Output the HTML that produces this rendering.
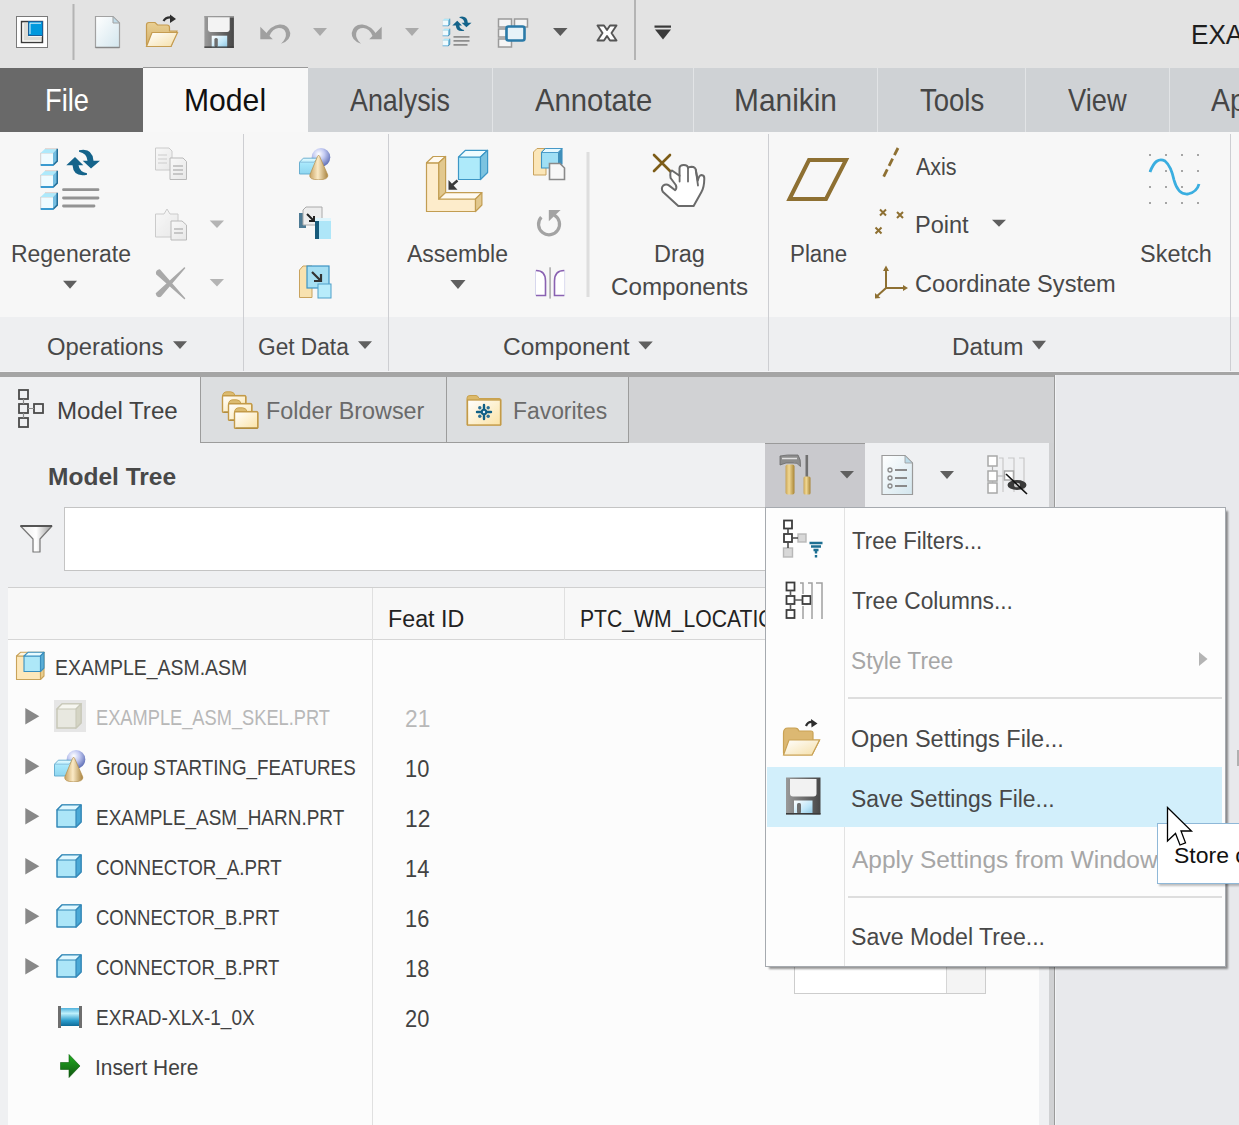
<!DOCTYPE html>
<html><head><meta charset="utf-8">
<style>
*{margin:0;padding:0;box-sizing:border-box}
html,body{width:1239px;height:1125px;overflow:hidden}
body{background:#e3e3e3;position:relative;font-family:"Liberation Sans",sans-serif;color:#3a3a3a}
.a{position:absolute}
.t{position:absolute;white-space:nowrap;line-height:1;transform-origin:0 0}
svg{position:absolute;overflow:visible}
</style></head><body>

<!-- QAT -->
<div class="a" style="left:0;top:0;width:1239px;height:68px;background:#e3e3e3"></div>
<div class="t" style="left:1191.06px;top:20.16px;font-size:28.41px;color:#1e1e1e;transform:scaleX(0.9200)">EXA</div>


<svg class="a" style="left:0;top:0" width="1239" height="377">
<defs>
<linearGradient id="gdoc" x1="0" y1="0" x2="1" y2="1"><stop offset="0" stop-color="#ffffff"/><stop offset="1" stop-color="#d3e6ee"/></linearGradient>
<linearGradient id="gfold" x1="0" y1="0" x2="0" y2="1"><stop offset="0" stop-color="#e9cf93"/><stop offset="1" stop-color="#d3b06a"/></linearGradient>
<linearGradient id="gfoldf" x1="0" y1="0" x2="1" y2="1"><stop offset="0" stop-color="#ffffff"/><stop offset="1" stop-color="#f5dfa8"/></linearGradient>
<linearGradient id="gcube" x1="0" y1="0" x2="1" y2="1"><stop offset="0" stop-color="#e8f9ff"/><stop offset="1" stop-color="#9fdcf3"/></linearGradient>
<linearGradient id="gtan" x1="0" y1="0" x2="1" y2="1"><stop offset="0" stop-color="#fff4d6"/><stop offset="1" stop-color="#f0d49a"/></linearGradient>
</defs>
<!-- app icon -->
<rect x="16.5" y="16.5" width="31" height="31" fill="#fff" stroke="#7a7a7a" stroke-width="1"/>
<rect x="21.5" y="21.5" width="21" height="21" fill="#dcdcd6" stroke="#3a3a3a" stroke-width="1.4"/>
<path d="M23 23 V41 H41" fill="none" stroke="#fff" stroke-width="1.2"/>
<path d="M28.5 36 H42" stroke="#fff" stroke-width="1.4"/>
<rect x="28.5" y="21.5" width="14" height="14" fill="#0099dd" stroke="#1b5e98" stroke-width="1"/>
<path d="M30 34 V23.2 H41" fill="none" stroke="#e6f4fb" stroke-width="1"/>
<!-- separators -->
<rect x="72.5" y="4" width="2" height="56" fill="#b4b4b4"/>
<rect x="634" y="0" width="2" height="60" fill="#b4b4b4"/>
<!-- new doc -->
<path d="M95.5 16.5 H113 L119.5 23 V47.5 H95.5 Z" fill="url(#gdoc)" stroke="#a2a2a2" stroke-width="1.2"/>
<path d="M95.5 47.5 H119.5" stroke="#888" stroke-width="1.5"/>
<path d="M113 16.5 V23 H119.5 Z" fill="#bfdbe8" stroke="#a2a2a2" stroke-width="1"/>
<!-- open folder -->
<path d="M146.5 44 V25 Q146.5 22.5 149 22.5 H155 L157.5 25 H167 Q169.5 25 169.5 27.5 V31 H177 L171 46.5 H147 Z" fill="url(#gfold)" stroke="#c59c51" stroke-width="1.2"/>
<path d="M152 32.5 H177.5 L171 46.5 H146.5 Z" fill="url(#gfoldf)" stroke="#c59c51" stroke-width="1.2"/>
<path d="M163.5 21 Q166 16.5 172 17.5" fill="none" stroke="#2e2e2e" stroke-width="2.2"/>
<path d="M170 14.5 L176 19 L170 23 Z" fill="#2e2e2e"/>
<!-- save -->
<defs><linearGradient id="gsave" x1="0" y1="0" x2="1" y2="0"><stop offset="0" stop-color="#9a9a9a"/><stop offset="0.5" stop-color="#707070"/><stop offset="1" stop-color="#474747"/></linearGradient>
<linearGradient id="gshut" x1="0" y1="0" x2="1" y2="1"><stop offset="0" stop-color="#ffffff"/><stop offset="0.6" stop-color="#bfe6f8"/><stop offset="1" stop-color="#8cc4e0"/></linearGradient></defs>
<rect x="204.4" y="16.1" width="29.5" height="31.7" fill="url(#gsave)"/>
<rect x="204.4" y="16.1" width="29.5" height="1.5" fill="#9c9c9c"/>
<path d="M208 17.3 H229.7 V29.5 Q229.7 31.9 227.3 31.9 H210.4 Q208 31.9 208 29.5 Z" fill="#f3f3f3"/>
<rect x="211.7" y="35.7" width="15.5" height="12.1" fill="url(#gshut)"/>
<rect x="214.4" y="38" width="3.4" height="9" rx="1.5" fill="#6e6e6e"/>
<rect x="204.4" y="46.5" width="29.5" height="1.3" fill="#3a3a3a"/>
<!-- undo -->
<path d="M265.5 34.5 Q271 25.5 279.5 24.5 Q288.5 24 290.3 33 Q290.8 40.5 281 43.8 Q286.8 38.5 285.8 33 Q284.5 27.8 278.5 28 Q272.5 28.5 269.5 36 Z" fill="#a0a0a0"/>
<path d="M260.3 26.7 V39.3 H272.8 Z" fill="#a0a0a0"/>
<path d="M313 28 H327 L320 36 Z" fill="#aaaaaa"/>
<!-- redo -->
<g transform="translate(642 0) scale(-1 1)"><path d="M265.5 34.5 Q271 25.5 279.5 24.5 Q288.5 24 290.3 33 Q290.8 40.5 281 43.8 Q286.8 38.5 285.8 33 Q284.5 27.8 278.5 28 Q272.5 28.5 269.5 36 Z" fill="#a0a0a0"/>
<path d="M260.3 26.7 V39.3 H272.8 Z" fill="#a0a0a0"/>
</g>
<path d="M405 28 H419 L412 36 Z" fill="#aaaaaa"/>
<!-- regen small -->
<use href="#bcube" x="442.2" y="18.2" width="8.2" height="8.2"/>
<use href="#bcube" x="442.2" y="28.2" width="8.2" height="8.2"/>
<use href="#bcube" x="442.2" y="38.2" width="8.2" height="8.2"/>
<path d="M453.5 36.8 H469.5 M453.5 40.8 H469.5 M453.5 44.8 H467.5" stroke="#8e8e8e" stroke-width="1.7"/>
<g transform="translate(452.3 15.3) scale(0.57) translate(-66.3 -147.5)">
<path d="M79 150.3 Q92.5 147.5 93.5 160.7 H100 L91 168.5 L82.7 160.7 H87.5 Q87 153.5 79 151.8 Z" fill="#14638a"/>
<path d="M87 174.7 Q73.5 177.5 72.5 165.3 H66.3 L75 157 L83.3 165.3 H78.5 Q79.5 172 87 173.2 Z" fill="#14638a"/>
</g>
<!-- windows -->
<rect x="498.5" y="19" width="13" height="8" fill="#f5f5f5" stroke="#9a9a9a" stroke-width="1.5"/>
<rect x="514.5" y="19" width="13" height="8" fill="#f5f5f5" stroke="#9a9a9a" stroke-width="1.5"/>
<rect x="498.5" y="29" width="8" height="8" fill="#f5f5f5" stroke="#9a9a9a" stroke-width="1.5"/>
<rect x="498.5" y="39" width="13" height="8" fill="#f5f5f5" stroke="#9a9a9a" stroke-width="1.5"/>
<rect x="506.5" y="26.5" width="18" height="14" rx="2" fill="#e6f2f8" stroke="#2a7aa8" stroke-width="2.6"/>
<path d="M553 28 H567.5 L560.3 36 Z" fill="#5a5a5a"/>
<!-- close X -->
<path d="M597.5 25.5 H604 L607 30 L610 25.5 H616.5 L611.5 33 L616.5 40.5 H610 L607 36 L604 40.5 H597.5 L602.5 33 Z" fill="#fff" stroke="#555" stroke-width="1.9" stroke-linejoin="round"/>
<!-- customize -->
<rect x="654.5" y="25.5" width="16.5" height="2.2" fill="#3a3a3a"/>
<path d="M655 29.5 H671 L663 39.5 Z" fill="#3a3a3a"/>
</svg>

<!-- Tabs -->
<div class="a" style="left:0;top:68px;width:143px;height:64px;background:#696969"></div>
<div class="t" style="left:45.41px;top:84.81px;font-size:30.58px;color:#ffffff;transform:scaleX(0.8930)">File</div>
<div class="a" style="left:143px;top:67px;width:165px;height:65px;background:#f8f8f8;border-top:1px solid #9a9a9a"></div>
<div class="t" style="left:184.03px;top:84.81px;font-size:30.58px;color:#101010;transform:scaleX(0.9855)">Model</div>
<div class="a" style="left:308px;top:68px;width:931px;height:64px;background:#cfd2d5"></div>
<div class="a" style="left:492px;top:68px;width:1px;height:64px;background:#e2e4e6"></div>
<div class="a" style="left:693px;top:68px;width:1px;height:64px;background:#e2e4e6"></div>
<div class="a" style="left:877px;top:68px;width:1px;height:64px;background:#e2e4e6"></div>
<div class="a" style="left:1025px;top:68px;width:1px;height:64px;background:#e2e4e6"></div>
<div class="a" style="left:1169px;top:68px;width:1px;height:64px;background:#e2e4e6"></div>
<div class="t" style="left:350.30px;top:84.81px;font-size:30.58px;color:#464646;transform:scaleX(0.8782)">Analysis</div>
<div class="t" style="left:534.80px;top:84.81px;font-size:30.58px;color:#464646;transform:scaleX(0.9575)">Annotate</div>
<div class="t" style="left:733.75px;top:84.81px;font-size:30.58px;color:#464646;transform:scaleX(0.9774)">Manikin</div>
<div class="t" style="left:919.70px;top:84.81px;font-size:30.58px;color:#464646;transform:scaleX(0.8992)">Tools</div>
<div class="t" style="left:1067.60px;top:84.81px;font-size:30.58px;color:#464646;transform:scaleX(0.8916)">View</div>
<div class="t" style="left:1211.00px;top:84.81px;font-size:30.58px;color:#464646;transform:scaleX(0.9300)">Ap</div>

<!-- Ribbon -->
<div class="a" style="left:0;top:132px;width:1239px;height:185px;background:#f7f7f7"></div>
<div class="a" style="left:0;top:317px;width:1239px;height:55px;background:#eeeff1"></div>
<div class="a" style="left:243px;top:134px;width:1px;height:238px;background:#cdced2"></div>
<div class="a" style="left:388px;top:134px;width:1px;height:238px;background:#cdced2"></div>
<div class="a" style="left:768px;top:134px;width:1px;height:238px;background:#cdced2"></div>
<div class="a" style="left:1230px;top:134px;width:1px;height:238px;background:#cdced2"></div>

<div class="t" style="left:10.53px;top:243.32px;font-size:23.62px;color:#484848;transform:scaleX(0.9726)">Regenerate</div>
<div class="t" style="left:407.40px;top:243.32px;font-size:23.62px;color:#484848;transform:scaleX(0.9736)">Assemble</div>
<div class="t" style="left:654.00px;top:243.32px;font-size:23.62px;color:#484848;transform:scaleX(0.9951)">Drag</div>
<div class="t" style="left:610.78px;top:275.52px;font-size:23.62px;color:#484848;transform:scaleX(1.0238)">Components</div>
<div class="t" style="left:790.05px;top:243.32px;font-size:23.62px;color:#484848;transform:scaleX(0.9451)">Plane</div>
<div class="t" style="left:915.80px;top:154.77px;font-size:23.91px;color:#484848;transform:scaleX(0.8980)">Axis</div>
<div class="t" style="left:914.82px;top:212.77px;font-size:23.91px;color:#484848;transform:scaleX(0.9843)">Point</div>
<div class="t" style="left:914.82px;top:272.43px;font-size:24.20px;color:#484848;transform:scaleX(0.9762)">Coordinate System</div>
<div class="t" style="left:1139.81px;top:243.32px;font-size:23.62px;color:#484848;transform:scaleX(0.9936)">Sketch</div>

<div class="t" style="left:47.01px;top:335.47px;font-size:23.91px;color:#484848;transform:scaleX(0.9949)">Operations</div>
<div class="t" style="left:258.05px;top:335.47px;font-size:23.91px;color:#484848;transform:scaleX(0.9489)">Get Data</div>
<div class="t" style="left:502.58px;top:335.47px;font-size:23.91px;color:#484848;transform:scaleX(1.0248)">Component</div>
<div class="t" style="left:952.28px;top:335.47px;font-size:23.91px;color:#484848;transform:scaleX(1.0161)">Datum</div>


<svg class="a" style="left:0;top:0" width="1239" height="377">
<defs>
<symbol id="bcube" viewBox="0 0 18 18">
<path d="M0.7 5 H13 V17.3 H0.7 Z" fill="#effbff"/>
<path d="M0.7 17.3 V5 H13" fill="none" stroke="#cfcfcf" stroke-width="1"/>
<path d="M0.7 5 L5 0.7 H17.3 L13 5 Z" fill="#aee9fb"/>
<path d="M5 0.7 H17.3" stroke="#e0c8c0" stroke-width="0.8"/>
<path d="M13 5 L17.3 0.7 V13 L13 17.3 Z" fill="#74bde0"/>
<path d="M17.3 0.7 V13 L13 17.3" fill="none" stroke="#246f98" stroke-width="1.6"/>
<path d="M0.7 17 H13.5" stroke="#3a9ad0" stroke-width="2"/>
</symbol>
<linearGradient id="gpage" x1="0" y1="0" x2="1" y2="1"><stop offset="0" stop-color="#fafafa"/><stop offset="1" stop-color="#dcdcdc"/></linearGradient>
</defs>
<!-- Regenerate -->
<use href="#bcube" x="40" y="148" width="18" height="18"/>
<use href="#bcube" x="40" y="170" width="18" height="18"/>
<use href="#bcube" x="40" y="192" width="18" height="18"/>
<path d="M63.5 189.7 H98 M63.5 198 H98 M63.5 206 H94" stroke="#939393" stroke-width="2.8" stroke-linecap="round"/>
<path d="M79 150.3 Q92.5 147.5 93.5 160.7 H100 L91 168.5 L82.7 160.7 H87.5 Q87 153.5 79 151.8 Z" fill="#14638a"/>
<path d="M87 174.7 Q73.5 177.5 72.5 165.3 H66.3 L75 157 L83.3 165.3 H78.5 Q79.5 172 87 173.2 Z" fill="#14638a"/>
<path d="M63 280.7 H77 L70 288.8 Z" fill="#5f5f5f"/>
<!-- copy -->
<g opacity="0.55">
<path d="M155.5 148 H169 L172 151 V170 H155.5 Z" fill="url(#gpage)" stroke="#a8a8a8"/>
<path d="M158 155 H167 M158 159 H167 M158 163 H167" stroke="#aaa" stroke-width="1.2"/>
<path d="M170 158 H183 L186.5 161.5 V179.5 H170 Z" fill="url(#gpage)" stroke="#888"/>
<path d="M173 166 H183 M173 170 H183 M173 174 H183" stroke="#888" stroke-width="1.4"/>
</g>
<!-- paste -->
<g opacity="0.55">
<path d="M155.5 214 H164 L167 209 L170 214 H178 V237 H155.5 Z" fill="url(#gpage)" stroke="#a8a8a8"/>
<path d="M171 221 H182 L186.5 225 V240 H171 Z" fill="url(#gpage)" stroke="#888"/>
<path d="M174 229 H183 M174 233 H183" stroke="#888" stroke-width="1.4"/>
</g>
<path d="M209.7 220.5 H224 L217 228 Z" fill="#b4b4b4"/>
<!-- delete -->
<path d="M156.8 274 Q156 271 159.5 270 L184.5 298.5 Z" fill="#a9a9a9" stroke="#a9a9a9" stroke-width="1.5" stroke-linejoin="round"/>
<path d="M184.5 268 L160.5 296 Q157.5 297.5 156.5 293.5 Z" fill="#a9a9a9" stroke="#a9a9a9" stroke-width="1.5" stroke-linejoin="round"/>
<path d="M209.7 279 H224 L217 286.6 Z" fill="#b4b4b4"/>
<!-- Get data 1 -->
<use href="#grp" x="299" y="148" width="32" height="32"/>
<!-- Get data 2 -->
<path d="M299 213 H306 V228 H299 Z" fill="#4d7a94"/>
<path d="M303 210 L306 207 H322 V225 H303 Z" fill="#ededed" stroke="#aaa" stroke-width="1"/>
<path d="M307 214 L314 221 M314 216 V221 H309" stroke="#222" stroke-width="2" fill="none"/>
<rect x="315" y="218" width="16" height="21" fill="#aee6f8"/>
<rect x="315" y="218" width="4" height="21" fill="#175a7a"/>
<rect x="315" y="218" width="16" height="3" fill="#dff5fc"/>
<!-- Get data 3 -->
<path d="M299.5 270 L303 266 H312 V297.5 H299.5 Z" fill="#f8e2b0" stroke="#c9a35e" stroke-width="1"/>
<rect x="307" y="266" width="22" height="22" fill="#a6dff3" stroke="#3d93c4" stroke-width="1.2"/>
<path d="M312 272 L321 281 M321 274 V281 H314" stroke="#333" stroke-width="2.2" fill="none"/>
<rect x="318" y="284" width="13" height="14" fill="#b8ecfb" stroke="#4fa0c9" stroke-width="1"/>
<!-- Assemble -->
<g stroke="#c29d52" stroke-width="1.2" stroke-linejoin="round">
<path d="M426.5 162.8 H438.8 V199 H475.5 V211.5 H426.5 Z" fill="#fdeccb"/>
<path d="M426.5 162.8 L433.2 156.5 H445.6 L438.8 162.8 Z" fill="#fffaf0"/>
<path d="M438.8 162.8 L445.6 156.5 V192.6 L438.8 199 Z" fill="#e2c88e"/>
<path d="M438.8 199 L445.6 192.6 H481.9 L475.5 199 Z" fill="#fffaf0"/>
<path d="M475.5 199 L481.9 192.6 V205 L475.5 211.5 Z" fill="#e2c88e"/>
</g>
<g stroke="#3d97c6" stroke-width="1.2" stroke-linejoin="round">
<path d="M458.5 157 H480.5 V179.5 H458.5 Z" fill="#aeeafa"/>
<path d="M458.5 157 L465.5 150.3 H487.6 L480.5 157 Z" fill="#f0fcff"/>
<path d="M480.5 157 L487.6 150.3 V172.5 L480.5 179.5 Z" fill="#7cc3e0"/>
</g>
<path d="M457.5 180.5 L450 187" stroke="#3a3a3a" stroke-width="2.4"/>
<path d="M448.5 180 L448.5 189.8 L457.5 189.8 Z" fill="#3a3a3a"/>
<path d="M450.4 280 H465.5 L458 289 Z" fill="#5f5f5f"/>
<!-- small assemble 1 -->
<path d="M533.5 152 L537 148.5 H546 V175 H533.5 Z" fill="#fbe6b8" stroke="#c9a35e" stroke-width="1"/>
<path d="M541.5 152.5 L545.5 148.5 H562 V164 L558 168 H541.5 Z" fill="#9fdff5" stroke="#3d93c4" stroke-width="1.1"/>
<path d="M541.5 152.5 L545.5 148.5 H562 L558 152.5 Z" fill="#e6f9ff" stroke="#3d93c4" stroke-width="0.9"/>
<path d="M558 152.5 L562 148.5 V164 L558 168 Z" fill="#3f8fba"/>
<path d="M549.5 163.5 H560 L564.5 168 V179.5 H549.5 Z" fill="#f7f7f7" stroke="#8a8a8a" stroke-width="1.6"/>
<!-- rotate -->
<path d="M541.3 217.2 A10.5 10.5 0 1 0 554.3 215.2" fill="none" stroke="#a3a3a3" stroke-width="3.2"/>
<path d="M548.8 210 H560.6 L548.8 221.2 Z" fill="#a3a3a3"/>
<!-- mirror -->
<path d="M535.7 270.4 V295.6" stroke="#cfcfea" stroke-width="1"/>
<path d="M564.6 270.4 V295.6" stroke="#cfcfea" stroke-width="1"/>
<path d="M536 270.5 Q545.5 270.5 545.5 281 V295.5 H536" fill="#fff" stroke="#8a62b2" stroke-width="1.6"/>
<path d="M564.3 270.5 Q554.5 270.5 554.5 281 V295.5 H564.3" fill="#fff" stroke="#8a62b2" stroke-width="1.6"/>
<rect x="549.2" y="267.3" width="1.8" height="31.3" fill="#b5b5b5"/>
<!-- separator -->
<rect x="586.5" y="152" width="3" height="145" fill="#dedede"/>
<!-- drag components -->
<path d="M654 155 L670.5 171.5 M670 155 L654 171" stroke="#7d5c17" stroke-width="2.6" stroke-linecap="round"/>
<path d="M672 170.5 L679.5 175.8 V168 Q679.8 165 683.8 165 Q687.8 165 688 168 Q688.5 166.8 691.5 166.8 Q695.5 167 695.8 170 L697.8 180.5 Q699 175.2 701.5 175 Q704.5 175.2 704.3 178.5 Q704.2 187.5 701.3 192.3 L693.6 206 H678.3 L662.8 191.8 Q660.8 188 663.2 185.6 Q666.2 183.4 669.2 185.6 L675.2 190.2 Q677.2 188 675.8 185 L670.6 178 Q669.6 171.2 672 170.5 Z" fill="#fff" stroke="#6a6a6a" stroke-width="2" stroke-linejoin="round"/>
<path d="M679.6 175.5 V181.5 M688 168 V181.5 M695.8 170 L698 185.5" stroke="#6a6a6a" stroke-width="1.8" stroke-linecap="round"/>
<!-- datum plane -->
<path d="M789.5 199 L809 160 H846 L826 199 Z" fill="none" stroke="#8e7032" stroke-width="4"/>
<!-- axis -->
<path d="M898 148 L882 180" stroke="#8e7032" stroke-width="2.8" stroke-dasharray="8 4"/>
<!-- point -->
<path d="M880 209.5 L886 215.5 M886 209.5 L880 215.5 M897 212 L903 218 M903 212 L897 218 M875.5 227.5 L881.5 233.5 M881.5 227.5 L875.5 233.5" stroke="#8e7032" stroke-width="2"/>
<path d="M992 219.7 H1006 L999 226.7 Z" fill="#5f5f5f"/>
<!-- coord -->
<path d="M886 270 V288 L876 297 M886 288 H904" fill="none" stroke="#8e7032" stroke-width="2"/>
<path d="M883 271 L886 265.5 L889 271 Z M903 285 L908 288 L903 291 Z M875 293 L875 298.5 L880.5 298 Z" fill="#8e7032"/>
<!-- sketch -->
<g fill="#8a8a8a">
<circle cx="1150" cy="155" r="1"/><circle cx="1166" cy="155" r="1"/><circle cx="1182" cy="155" r="1"/><circle cx="1198" cy="155" r="1"/>
<circle cx="1150" cy="171" r="1"/><circle cx="1166" cy="171" r="1"/><circle cx="1182" cy="171" r="1"/><circle cx="1198" cy="171" r="1"/>
<circle cx="1150" cy="187" r="1"/><circle cx="1166" cy="187" r="1"/><circle cx="1182" cy="187" r="1"/><circle cx="1198" cy="187" r="1"/>
<circle cx="1150" cy="203" r="1"/><circle cx="1166" cy="203" r="1"/><circle cx="1182" cy="203" r="1"/><circle cx="1198" cy="203" r="1"/>
</g>
<path d="M1150 172 Q1156 156 1165 161 Q1171 166 1174 180 Q1178 195 1188 194 Q1197 192 1199 184" fill="none" stroke="#3aaee0" stroke-width="2.8"/>
<!-- group label arrows -->
<path d="M173 341.3 H187 L180 349 Z" fill="#5f5f5f"/>
<path d="M358 341.3 H372 L365 349 Z" fill="#5f5f5f"/>
<path d="M638.3 341.5 H652.8 L645.5 349.5 Z" fill="#5f5f5f"/>
<path d="M1032 340.7 H1046 L1039 349.6 Z" fill="#5f5f5f"/>
</svg>

<!-- dark band -->
<div class="a" style="left:0;top:371px;width:1239px;height:1px;background:#f4f4f6"></div>
<div class="a" style="left:0;top:372px;width:1239px;height:5px;background:#a5a5a5"></div>

<!-- Panel -->
<div class="a" style="left:0;top:377px;width:1054px;height:748px;background:#eff0f2"></div>
<div class="a" style="left:200px;top:377px;width:429px;height:66px;background:#dcdee0;border-left:1px solid #9c9c9c;border-bottom:1px solid #9c9c9c"></div>
<div class="a" style="left:446px;top:377px;width:1px;height:66px;background:#9c9c9c"></div>
<div class="a" style="left:628px;top:377px;width:1px;height:66px;background:#9c9c9c"></div>
<div class="a" style="left:629px;top:377px;width:425px;height:66px;background:#d1d2d4"></div>
<div class="a" style="left:1049px;top:443px;width:5px;height:682px;background:#d0d1d3"></div>
<div class="a" style="left:1054px;top:375px;width:1px;height:750px;background:#9a9a9a"></div>
<div class="a" style="left:1055px;top:375px;width:184px;height:750px;background:#e8e9ec;border-left:1px solid #f2f3f5"></div>
<div class="a" style="left:1237px;top:750px;width:2px;height:16px;background:#b0b0b0"></div>

<div class="t" style="left:57.43px;top:398.68px;font-size:24.49px;color:#424242;transform:scaleX(0.9858)">Model Tree</div>
<div class="t" style="left:266.49px;top:398.68px;font-size:24.49px;color:#6a6a6a;transform:scaleX(0.9539)">Folder Browser</div>
<div class="t" style="left:512.53px;top:398.68px;font-size:24.49px;color:#6a6a6a;transform:scaleX(0.9345)">Favorites</div>
<div class="t" style="left:48.20px;top:464.86px;font-size:24.64px;color:#484848;font-weight:bold;transform:scaleX(0.9958)">Model Tree</div>

<!-- pressed toolbar button -->
<div class="a" style="left:765px;top:443px;width:100px;height:64px;background:#c9c9cd;border-top:1px solid #9a9a9a"></div>

<!-- filter input -->
<div class="a" style="left:64px;top:507px;width:760px;height:64px;background:#fff;border:1px solid #c4c4c4"></div>

<!-- table -->
<div class="a" style="left:8px;top:587px;width:1031px;height:538px;background:#fcfcfc;border-top:1px solid #d0d0d0"></div>
<div class="a" style="left:8px;top:588px;width:1031px;height:52px;background:#f8f8f8;border-bottom:1px solid #d6d6d6"></div>
<div class="a" style="left:372px;top:588px;width:1px;height:537px;background:#e0e0e0"></div>
<div class="a" style="left:564px;top:588px;width:1px;height:52px;background:#e0e0e0"></div>
<div class="t" style="left:387.91px;top:606.66px;font-size:24.64px;color:#222222;transform:scaleX(0.9441)">Feat ID</div>
<div class="t" style="left:580.28px;top:606.66px;font-size:24.64px;color:#222222;transform:scaleX(0.8592)">PTC_WM_LOCATION</div>

<div class="t" style="left:55.13px;top:657.21px;font-size:22.46px;color:#424242;transform:scaleX(0.8651)">EXAMPLE_ASM.ASM</div>
<div class="t" style="left:95.69px;top:707.21px;font-size:22.46px;color:#b8b8b8;transform:scaleX(0.8128)">EXAMPLE_ASM_SKEL.PRT</div>
<div class="t" style="left:95.66px;top:757.21px;font-size:22.46px;color:#424242;transform:scaleX(0.8358)">Group STARTING_FEATURES</div>
<div class="t" style="left:95.66px;top:807.21px;font-size:22.46px;color:#424242;transform:scaleX(0.8441)">EXAMPLE_ASM_HARN.PRT</div>
<div class="t" style="left:95.97px;top:857.21px;font-size:22.46px;color:#424242;transform:scaleX(0.8342)">CONNECTOR_A.PRT</div>
<div class="t" style="left:95.98px;top:907.21px;font-size:22.46px;color:#424242;transform:scaleX(0.8234)">CONNECTOR_B.PRT</div>
<div class="t" style="left:95.98px;top:957.21px;font-size:22.46px;color:#424242;transform:scaleX(0.8234)">CONNECTOR_B.PRT</div>
<div class="t" style="left:95.65px;top:1007.21px;font-size:22.46px;color:#424242;transform:scaleX(0.8480)">EXRAD-XLX-1_0X</div>
<div class="t" style="left:94.64px;top:1057.21px;font-size:22.46px;color:#424242;transform:scaleX(0.9303)">Insert Here</div>

<div class="t" style="left:405.23px;top:708.04px;font-size:23.48px;color:#b8b8b8;transform:scaleX(0.9687)">21</div>
<div class="t" style="left:405.27px;top:758.04px;font-size:23.48px;color:#424242;transform:scaleX(0.9301)">10</div>
<div class="t" style="left:405.23px;top:808.04px;font-size:23.48px;color:#424242;transform:scaleX(0.9687)">12</div>
<div class="t" style="left:405.27px;top:858.04px;font-size:23.48px;color:#424242;transform:scaleX(0.9301)">14</div>
<div class="t" style="left:405.27px;top:908.04px;font-size:23.48px;color:#424242;transform:scaleX(0.9301)">16</div>
<div class="t" style="left:405.27px;top:958.04px;font-size:23.48px;color:#424242;transform:scaleX(0.9301)">18</div>
<div class="t" style="left:405.27px;top:1008.04px;font-size:23.48px;color:#424242;transform:scaleX(0.9301)">20</div>


<svg class="a" style="left:0;top:0" width="1239" height="1125">
<defs>
<linearGradient id="gfb" x1="0" y1="0" x2="1" y2="1"><stop offset="0" stop-color="#ffffff"/><stop offset="1" stop-color="#fbe3a6"/></linearGradient>
<linearGradient id="ghandle" x1="0" y1="0" x2="1" y2="0"><stop offset="0" stop-color="#c9a455"/><stop offset="0.4" stop-color="#f1d893"/><stop offset="1" stop-color="#a88434"/></linearGradient>
<linearGradient id="gcyl" x1="0" y1="0" x2="0" y2="1"><stop offset="0" stop-color="#4fb2dc"/><stop offset="0.3" stop-color="#bff0fc"/><stop offset="0.7" stop-color="#2a9ccc"/><stop offset="1" stop-color="#0f6b98"/></linearGradient>
<linearGradient id="garrow" x1="0" y1="0" x2="0" y2="1"><stop offset="0" stop-color="#1fae1f"/><stop offset="1" stop-color="#115511"/></linearGradient>
<linearGradient id="gfun" x1="0" y1="0" x2="1" y2="0"><stop offset="0" stop-color="#e9e9e9"/><stop offset="0.5" stop-color="#ffffff"/><stop offset="1" stop-color="#9a9a9a"/></linearGradient>
<symbol id="grp" viewBox="0 0 32 32">
<defs>
<radialGradient id="gsph" cx="0.38" cy="0.32" r="0.7"><stop offset="0" stop-color="#ffffff"/><stop offset="0.45" stop-color="#c3caf2"/><stop offset="1" stop-color="#6272b8"/></radialGradient>
<linearGradient id="gcone" x1="0" y1="0" x2="1" y2="0"><stop offset="0" stop-color="#c8a261"/><stop offset="0.45" stop-color="#fbeac6"/><stop offset="1" stop-color="#a8833f"/></linearGradient>
<linearGradient id="gbox" x1="0" y1="0" x2="0" y2="1"><stop offset="0" stop-color="#eafcff"/><stop offset="0.35" stop-color="#a6e7fb"/><stop offset="1" stop-color="#8fd6f0"/></linearGradient>
</defs>
<circle cx="22" cy="9.3" r="9.3" fill="url(#gsph)"/>
<path d="M0.5 14.2 L4.3 10.2 H19 V23 L15 26 H0.5 Z" fill="url(#gbox)" stroke="#5fa8cc" stroke-width="0.9"/>
<path d="M0.5 14.2 H15 L19 10.2" fill="none" stroke="#7ab8d8" stroke-width="0.8"/>
<path d="M19.6 7.2 Q18.8 7.2 17 12 L10.8 27 Q9.8 31.8 19.6 31.8 Q29.6 31.8 28.8 27 L22.2 12 Q20.4 7.2 19.6 7.2 Z" fill="url(#gcone)" stroke="#b48f4c" stroke-width="0.7"/>
</symbol>
<symbol id="pcube" viewBox="0 0 26 24">
<path d="M1 6 L6 1 H25 V18 L20 23 H1 Z" fill="#acE6f8" stroke="#3589b8" stroke-width="1.5" stroke-linejoin="round"/>
<path d="M1 6 L6 1 H25 L20 6 Z" fill="#e0f8ff" stroke="#3589b8" stroke-width="1.2" stroke-linejoin="round"/>
<path d="M20 6 L25 1 V18 L20 23 Z" fill="#4aa9d6" stroke="#3589b8" stroke-width="1.2" stroke-linejoin="round"/>
</symbol>
<symbol id="folder" viewBox="0 0 26 22">
<path d="M1.5 5 Q2 0.8 6 0.8 H9.5 Q13 0.8 14 4.4 H23.5 Q25 4.4 25 6 V21 H1.5 Z" fill="#dcbb70" stroke="#c9a24f" stroke-width="1"/>
<rect x="1.5" y="4.8" width="23.2" height="16.6" rx="1" fill="url(#gfb)" stroke="#c39a48" stroke-width="1.4"/>
<path d="M2.5 21 H24.5" stroke="#a8853a" stroke-width="1.2"/>
</symbol>
</defs>
<!-- model tree tab icon -->
<g fill="none" stroke="#4a4a4a" stroke-width="1.8">
<rect x="19" y="390" width="9" height="9"/><rect x="19" y="404" width="9" height="9"/><rect x="19" y="418" width="9" height="9"/><rect x="34" y="404" width="9" height="9"/>
</g>
<path d="M23.5 399 V404 M23.5 413 V418 M28 408.5 H34" stroke="#8a8a8a" stroke-width="1.2"/>
<!-- folder browser icon -->
<use href="#folder" x="221" y="391" width="26" height="22"/>
<use href="#folder" x="227" y="399" width="26" height="22"/>
<use href="#folder" x="233" y="407" width="26" height="22"/>
<!-- favorites icon -->
<path d="M467 398 Q467 395.5 470 395.5 H476 Q478 395.5 479 398.5 H499 Q501 398.5 501 400 V425 H467 Z" fill="#dcb96a" stroke="#c9a24f" stroke-width="1"/>
<rect x="467.5" y="400" width="33" height="25" fill="url(#gfb)" stroke="#c39a48" stroke-width="1.3"/>
<g stroke="#0f5f86" stroke-width="2.4" stroke-linecap="round">
<path d="M484 405 V419 M477 412 H491"/>
</g><g fill="#2a7096"><circle cx="479.8" cy="407.8" r="1.7"/><circle cx="488.2" cy="407.8" r="1.7"/><circle cx="479.8" cy="416.2" r="1.7"/><circle cx="488.2" cy="416.2" r="1.7"/>
</g>
<circle cx="484" cy="412" r="3.2" fill="#0f5f86"/><circle cx="484" cy="412" r="1.2" fill="#e8f4fa"/>
<!-- hammer & screwdriver -->
<path d="M780 456 Q786 454.5 798 455 Q801 459 800.5 466.5 Q797 462 793 463 H786 Q783 464 780 465 Z" fill="#8c8c8c" stroke="#6a6a6a" stroke-width="0.8"/>
<path d="M782 458.5 H797" stroke="#e0e0e0" stroke-width="1.5"/>
<rect x="785.5" y="464.5" width="9" height="30" rx="2" fill="url(#ghandle)"/>
<path d="M806.8 455 V477" stroke="#707070" stroke-width="2.6"/>
<rect x="803.5" y="476.5" width="7" height="18" rx="1.5" fill="url(#ghandle)"/>
<path d="M840 471 H854 L847 478.5 Z" fill="#5f5f5f"/>
<!-- list page -->
<path d="M882 455.5 H905 L912.5 463 V494.5 H882 Z" fill="url(#gdoc)" stroke="#9a9a9a" stroke-width="1.2"/>
<path d="M905 455.5 V463 H912.5 Z" fill="#bcdbe8" stroke="#9a9a9a" stroke-width="0.8"/>
<g fill="none" stroke="#8a8a8a" stroke-width="1.3"><circle cx="890" cy="470" r="2"/><circle cx="890" cy="478" r="2"/><circle cx="890" cy="486" r="2"/></g>
<path d="M895 470 H907 M895 478 H907 M895 486 H907" stroke="#8a8a8a" stroke-width="2"/>
<path d="M940 471 H954 L947 478.9 Z" fill="#5f5f5f"/>
<!-- tree eye -->
<g fill="#fff" stroke="#a8a8a8" stroke-width="1.5">
<rect x="988" y="456" width="9" height="10"/><rect x="988" y="471" width="9" height="10"/><rect x="988" y="483" width="9" height="10"/>
</g>
<path d="M992.5 466 V471 M992.5 481 V483 M997 476 H1004" stroke="#b0b0b0" stroke-width="1.2"/>
<path d="M999 458 H1003 V492 M1008 458 H1014 V492 M1019 458 H1024 V490" fill="none" stroke="#c8c8c8" stroke-width="1.2"/>
<rect x="1004.5" y="471" width="9" height="9" fill="#fff" stroke="#a8a8a8" stroke-width="1.5"/>
<ellipse cx="1017" cy="485" rx="9.5" ry="5" fill="#3a3a3a"/>
<ellipse cx="1017" cy="485" rx="3" ry="2.3" fill="#c8c8c8"/>
<path d="M1006 474 L1027 494" stroke="#111" stroke-width="1.6"/>
<!-- funnel -->
<path d="M20.5 526 H52 L40 539 V552 H33 V539 Z" fill="url(#gfun)" stroke="#777" stroke-width="1.2" stroke-linejoin="round"/>
<path d="M20.5 526 H52" stroke="#555" stroke-width="2"/>
<!-- tree rows -->
<g stroke="#c9a35a" stroke-width="1.1" stroke-linejoin="round">
<path d="M16.5 656 H40.5 V679.5 H16.5 Z" fill="#fde8bb"/>
<path d="M16.5 656 L20.5 652.3 H44 L40.5 656 Z" fill="#fff6e0"/>
<path d="M40.5 656 L44 652.3 V676 L40.5 679.5 Z" fill="#e9cd8e"/>
</g>
<g stroke="#3a8fbf" stroke-width="1.1" stroke-linejoin="round">
<path d="M24 656 H40.5 V671.5 H24 Z" fill="#aee8f8"/>
<path d="M24 656 L28 652.3 H44 L40.5 656 Z" fill="#e8fbff"/>
<path d="M40.5 656 L44 652.3 V668 L40.5 671.5 Z" fill="#5aaed6"/>
</g>
<g fill="#888">
<path d="M25.3 708 L39.3 716.2 L25.3 724.4 Z"/>
<path d="M25.3 758 L39.3 766.2 L25.3 774.4 Z"/>
<path d="M25.3 808 L39.3 816.2 L25.3 824.4 Z"/>
<path d="M25.3 858 L39.3 866.2 L25.3 874.4 Z"/>
<path d="M25.3 908 L39.3 916.2 L25.3 924.4 Z"/>
<path d="M25.3 958 L39.3 966.2 L25.3 974.4 Z"/>
</g>
<rect x="54" y="700" width="32" height="32" fill="#e6e6e6"/>
<path d="M57 709 L62 704 H81 V723 L76 728 H57 Z" fill="#e8e8e0" stroke="#c8c8b8" stroke-width="1.5"/>
<path d="M57 709 L62 704 H81 L76 709 Z" fill="#f6f6f0" stroke="#c8c8b8" stroke-width="1.1"/>
<path d="M76 709 L81 704 V723 L76 728 Z" fill="#d4d4c4" stroke="#c8c8b8" stroke-width="1.1"/>
<!-- group icon row -->
<use href="#grp" x="54" y="750" width="32" height="32"/>
<use href="#pcube" x="56" y="804" width="26" height="24"/>
<use href="#pcube" x="56" y="854" width="26" height="24"/>
<use href="#pcube" x="56" y="904" width="26" height="24"/>
<use href="#pcube" x="56" y="954" width="26" height="24"/>
<!-- exrad -->
<rect x="61" y="1008" width="18" height="18" fill="url(#gcyl)"/>
<path d="M59.5 1006 V1028 M80.5 1006 V1028" stroke="#6e6e6e" stroke-width="3"/>
<!-- insert here arrow -->
<path d="M60.5 1062.5 H69 V1054.5 L80 1066 L69 1077.5 V1069.5 H60.5 Z" fill="url(#garrow)" stroke="#0c5a0c" stroke-width="0.6"/>
</svg>

<!-- cell editor remnant -->
<div class="a" style="left:794px;top:940px;width:192px;height:54px;background:#fff;border:1px solid #cdcdcd"></div>
<div class="a" style="left:946px;top:941px;width:39px;height:52px;background:#f4f4f4;border-left:1px solid #d6d6d6"></div>

<!-- Menu -->
<div class="a" style="left:765px;top:507px;width:461px;height:460px;background:#fdfdfd;border:1px solid #a6aaaf;box-shadow:3px 3px 2px -1px rgba(0,0,0,0.42)"></div>
<div class="a" style="left:844px;top:508px;width:1px;height:458px;background:#e2e2e2"></div>
<div class="a" style="left:848px;top:697px;width:374px;height:2px;background:#dedede"></div>
<div class="a" style="left:848px;top:896px;width:374px;height:2px;background:#dedede"></div>
<div class="a" style="left:767px;top:767px;width:455px;height:60px;background:#d2effb"></div>
<div class="t" style="left:851.70px;top:528.90px;font-size:24.35px;color:#484848;transform:scaleX(0.9145)">Tree Filters...</div>
<div class="t" style="left:851.70px;top:588.87px;font-size:23.91px;color:#484848;transform:scaleX(0.9509)">Tree Columns...</div>
<div class="t" style="left:850.76px;top:648.65px;font-size:24.06px;color:#a6a6a6;transform:scaleX(0.9439)">Style Tree</div>
<div class="t" style="left:850.54px;top:727.40px;font-size:24.35px;color:#484848;transform:scaleX(0.9644)">Open Settings File...</div>
<div class="t" style="left:850.56px;top:786.80px;font-size:24.35px;color:#484848;transform:scaleX(0.9406)">Save Settings File...</div>
<div class="t" style="left:851.50px;top:847.53px;font-size:24.20px;color:#a6a6a6;transform:scaleX(1.0104)">Apply Settings from Window</div>
<div class="t" style="left:850.56px;top:924.88px;font-size:24.49px;color:#484848;transform:scaleX(0.9442)">Save Model Tree...</div>


<svg class="a" style="left:0;top:0" width="1239" height="1125">
<!-- tree filters icon -->
<g fill="#fff" stroke="#3c3c3c" stroke-width="1.8">
<rect x="784" y="520.5" width="8" height="8"/><rect x="784" y="534" width="8" height="8"/>
</g>
<rect x="783.5" y="548" width="9" height="9" fill="#d8d8d8" stroke="#b8b8b8" stroke-width="1.4"/>
<rect x="798" y="534" width="8" height="8" fill="#d8d8d8" stroke="#b8b8b8" stroke-width="1.4"/>
<path d="M788 528.5 V534 M788 542 V548 M792 538 H798" stroke="#4a4a4a" stroke-width="1.6"/>
<path d="M809.5 543 H822.5 M811 546.5 H821 M813.5 550 H818.5" stroke="#1d6f92" stroke-width="2.4"/>
<path d="M816 551 V559" stroke="#1d6f92" stroke-width="2.4" stroke-dasharray="2.5 1.5"/>
<!-- tree columns icon -->
<g fill="#fff" stroke="#3c3c3c" stroke-width="1.8">
<rect x="786.5" y="582.5" width="8" height="8"/><rect x="786.5" y="596" width="8" height="8"/><rect x="786.5" y="610" width="8" height="8"/>
<rect x="802.5" y="596" width="8" height="8"/>
</g>
<path d="M790.5 590.5 V596 M790.5 604 V610 M794.5 600 H802.5" stroke="#5a5a5a" stroke-width="1.6"/>
<path d="M800 583 H803 V594 M803 606 V619 M808 583 H812 V619 M816 583 H822 V619" fill="none" stroke="#a0a0a0" stroke-width="1.5"/>
<!-- submenu arrow -->
<path d="M1199 652 L1207.5 659 L1199 666 Z" fill="#b4b4b4"/>
<!-- open settings folder -->
<path d="M783.5 753 V733 Q783.5 728 788 728 H795 Q798 728 799 731 H811 Q813 731 813 733 V740 H819.5 L812 755 H784 Z" fill="#dcb872" stroke="#c9a255" stroke-width="1.2"/>
<path d="M789 740 H819.5 L812 755 H783.5 Z" fill="url(#gfoldf)" stroke="#c9a255" stroke-width="1.2"/>
<path d="M806 726 Q808 721 813 722" fill="none" stroke="#2e2e2e" stroke-width="2.2"/>
<path d="M811 719 L817.5 723.5 L811.5 727.5 Z" fill="#2e2e2e"/>
<!-- save settings floppy -->
<rect x="786" y="777.5" width="34.5" height="37" fill="url(#gsave)"/>
<path d="M790 779 H816.5 V793.5 Q816.5 796.5 813.5 796.5 H793 Q790 796.5 790 793.5 Z" fill="#f2f2f2"/>
<rect x="794" y="800.5" width="18.5" height="14" fill="url(#gshut)"/>
<rect x="797" y="803" width="4" height="10.5" rx="1.5" fill="#6e6e6e"/>
<rect x="786" y="813" width="34.5" height="1.5" fill="#3a3a3a"/>
</svg>

<!-- tooltip -->
<div class="a" style="left:1157px;top:823px;width:90px;height:61px;background:#fff;border:1px solid #8fb8d8;box-shadow:2px 2px 2px rgba(0,0,0,0.25)"></div>
<div class="t" style="left:1173.99px;top:844.36px;font-size:22.75px;color:#111111;transform:scaleX(1.0109)">Store c</div>


<svg class="a" style="left:0;top:0" width="1239" height="1125">
<path d="M1167.5 807.5 L1191.5 831 H1181 L1185.5 842.8 L1180 845 L1175.5 833.5 L1167.5 841 Z" fill="#fff" stroke="#000" stroke-width="1.3" stroke-linejoin="miter"/>
</svg>

</body></html>
